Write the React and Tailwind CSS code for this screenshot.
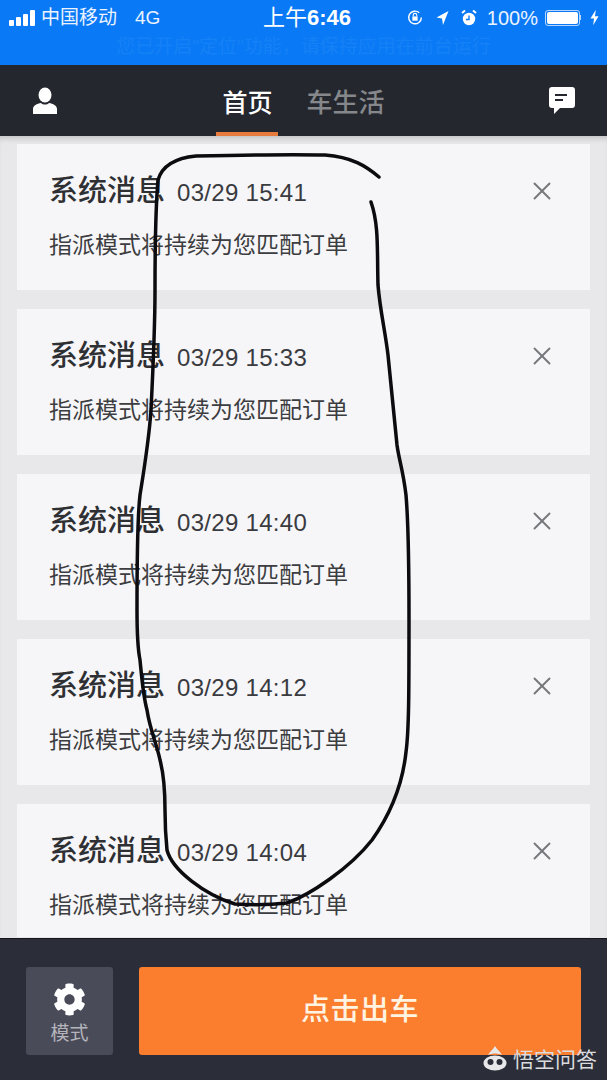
import { FaCog } from 'react-icons/fa';
import { X } from 'lucide-react';

const messages = ['03/29 15:41', '03/29 15:33', '03/29 14:40', '03/29 14:12', '03/29 14:04'];

const cjk = "font-['Liberation_Sans','Noto_Sans_CJK_SC',sans-serif]";

function StatusBar() {
  return (
    <div className={`h-[65px] bg-[#0a79f5] text-white ${cjk}`}>
      <div className="flex h-[35px] items-center justify-between pl-[9px] pr-[8px] text-[19px] leading-none">
        <div className="flex w-[206px] items-center">
          <div className="flex items-end gap-[2px]">
            <span className="h-[6px] w-[5px] rounded-[1px] bg-white" />
            <span className="h-[9px] w-[5px] rounded-[1px] bg-white" />
            <span className="h-[12px] w-[5px] rounded-[1px] bg-white" />
            <span className="h-[16px] w-[5px] rounded-[1px] bg-white" />
          </div>
          <span className="ml-[6px] text-[#eaf3ff]">中国移动</span>
          <span className="ml-[18px] text-[#eaf3ff]">4G</span>
        </div>
        <span className="text-[22px]">
          上午<span className="font-bold">6:46</span>
        </span>
        <div className="flex w-[200px] items-center justify-end">
          <svg width="18" height="19" viewBox="0 0 16 18" fill="none" stroke="white" strokeWidth="1.4">
            <path d="M14 9a6 6 0 1 1-2-4.5" />
            <rect x="5.5" y="8" width="5" height="4" fill="white" stroke="none" />
            <path d="M6.3 8V6.8a1.7 1.7 0 0 1 3.4 0V8" strokeWidth="1" />
          </svg>
          <svg className="ml-[11px]" width="15" height="16" viewBox="0 0 14 16">
            <path d="M13 1 L1 7.5 L6.5 8.5 L7.5 15 Z" fill="white" />
          </svg>
          <svg className="ml-[11px]" width="16" height="17" viewBox="0 0 16 17">
            <circle cx="8" cy="10" r="6.2" fill="white" />
            <path d="M8 6.5V10.5H5" fill="none" stroke="#0a79f5" strokeWidth="1.4" />
            <path d="M1 4 L4 1.5 M15 4 L12 1.5" stroke="white" strokeWidth="2" />
          </svg>
          <span className="ml-[10px] text-[20px] text-[#eaf3ff]">100%</span>
          <div className="ml-[7px] flex h-[16px] w-[35px] items-center rounded-[3px] border border-white/70 p-[1px]">
            <div className="h-full w-full rounded-[2px] bg-white" />
          </div>
          <span className="h-[5px] w-[1px] bg-white/70" />
          <svg className="ml-[9px]" width="9" height="17" viewBox="0 0 10 17">
            <path d="M6.5 0 L0.5 9.5 H4.5 L3.5 17 L9.5 7 H5.5 Z" fill="white" />
          </svg>
        </div>
      </div>
      {/* faded notice bar, barely readable in the screenshot */}
      <div className="pt-[2px] text-center text-[19px] leading-[20px] text-[#1581f6]">
        您已开启"定位"功能，请保持应用在前台运行
      </div>
    </div>
  );
}

function Header() {
  return (
    <div className={`flex h-[71px] items-start justify-between bg-[#24272e] pl-[32px] pr-[32px] ${cjk}`}>
      <svg className="mt-[21px]" width="26" height="29" viewBox="0 0 26 29" fill="white">
        <ellipse cx="13" cy="9" rx="6.5" ry="7.5" />
        <path d="M1 28 V23 C1 19.5 5 17.5 9 17 C11 19 15 19 17 17 C21 17.5 25 19.5 25 23 V28 Z" />
      </svg>
      <div className="mr-[6px] flex h-full items-start">
        <div className="flex h-full w-[62px] flex-col items-center justify-between">
          <span className="mt-[22px] text-[25px] font-medium leading-[32px] text-white">首页</span>
          <div className="h-[4px] w-full bg-[#e77a3d]" />
        </div>
        <span className="ml-[28px] mt-[22px] text-[26px] font-medium leading-[32px] text-[#85878b]">车生活</span>
      </div>
      <svg className="mt-[22px]" width="26" height="27" viewBox="0 0 26 27">
        <path d="M3 0 H23 A3 3 0 0 1 26 3 V18 A3 3 0 0 1 23 21 H11 L5 27 V21 H3 A3 3 0 0 1 0 18 V3 A3 3 0 0 1 3 0 Z" fill="white" />
        <path d="M6 8 H18 M6 13 H14" stroke="#24272e" strokeWidth="2" />
      </svg>
    </div>
  );
}

function MessageCard({ time, cut }) {
  return (
    <div className={`relative shrink-0 bg-[#f6f6f9] pl-[32px] pr-[36px] ${cut ? 'h-[133px]' : 'h-[146px]'}`}>
      <div className="flex items-baseline pt-[29px]">
        <span className="text-[29px] font-medium leading-[36px] text-[#2f3033]">系统消息</span>
        <span className="ml-[12px] text-[24px] leading-[36px] tracking-[0.3px] text-[#3a3b3f]">{time}</span>
      </div>
      <div className="mt-[19px] text-[23px] leading-[30px] text-[#3c3d40]">指派模式将持续为您匹配订单</div>
      <X className="absolute right-[33px] top-[32px] text-[#77787b]" size={30} strokeWidth={1.5} />
    </div>
  );
}

function Footer() {
  return (
    <div className={`flex h-[142px] gap-[26px] border-t border-[#15161a] bg-[#2b2d38] pl-[26px] pr-[26px] pt-[28px] ${cjk}`}>
      <div className="flex h-[88px] w-[87px] shrink-0 flex-col items-center rounded-[3px] bg-[#4a4b59] pt-[16px]">
        <FaCog className="text-white" size={33} />
        <span className="mt-[6px] text-[19px] leading-[24px] text-[#b4b4bb]">模式</span>
      </div>
      <div className="flex h-[88px] flex-1 items-center justify-center rounded-[3px] bg-[#fb7d2e] text-[29px] font-medium tracking-[0.5px] text-[#fff3e2]">
        点击出车
      </div>
    </div>
  );
}

export default function App() {
  return (
    <div className={`relative h-[1080px] w-[607px] overflow-hidden bg-[#e8e8ea] ${cjk}`}>
      <StatusBar />
      <Header />
      <div className="flex h-[802px] flex-col gap-[19px] overflow-hidden px-[17px] pt-[8px] shadow-[inset_0_6px_6px_-4px_rgba(0,0,0,0.18)]">
        {messages.map((time, i) => (
          <MessageCard key={time} time={time} cut={i === messages.length - 1} />
        ))}
      </div>
      <Footer />

      {/* hand drawn ink loop over the list */}
      <svg className="pointer-events-none absolute left-0 top-0" width="607" height="1080" viewBox="0 0 607 1080" fill="none">
        <path
          d="M379 177 C366 166 352 157 325 155 C290 154 240 155 196 156 C176 158 162 166 158 180 C155 215 155 260 155 290 C155 330 153 370 151 410 C149 440 144 470 140 495 C137 520 137 570 137 610 C137 640 138 650 140 660 C142 680 143 695 147 710 C150 730 157 745 160 760 C164 775 165 795 165 810 C165 825 166 840 167 850 C172 870 205 895 235 904 C250 905 270 905 287 903 C310 895 350 868 372 840 C392 812 403 780 406 752 C409 730 409 690 409 620 C409 570 409 530 406 495 C403 470 399 460 397 445 C394 415 391 385 388 355 C385 330 380 310 378 285 C377 250 379 225 371 202"
          stroke="#0c0c10"
          strokeWidth="3.5"
          strokeLinecap="round"
          strokeLinejoin="round"
        />
      </svg>

      {/* watermark */}
      <div className="absolute bottom-[8px] right-[10px] flex items-center gap-[6px] text-[21px] leading-none text-[#dcdcdf]">
        <svg width="24" height="26" viewBox="0 0 24 26">
          <path d="M12 0 C14 4 17 5 19 9 C14 7 10 7 5 9 C7 5 10 4 12 0 Z" fill="#e8e8ea" />
          <ellipse cx="12" cy="17" rx="11.5" ry="7.5" fill="#e8e8ea" />
          <circle cx="7.5" cy="16" r="3" fill="#2b2d38" />
          <circle cx="16.5" cy="16" r="3" fill="#2b2d38" />
        </svg>
        <span>悟空问答</span>
      </div>
    </div>
  );
}
